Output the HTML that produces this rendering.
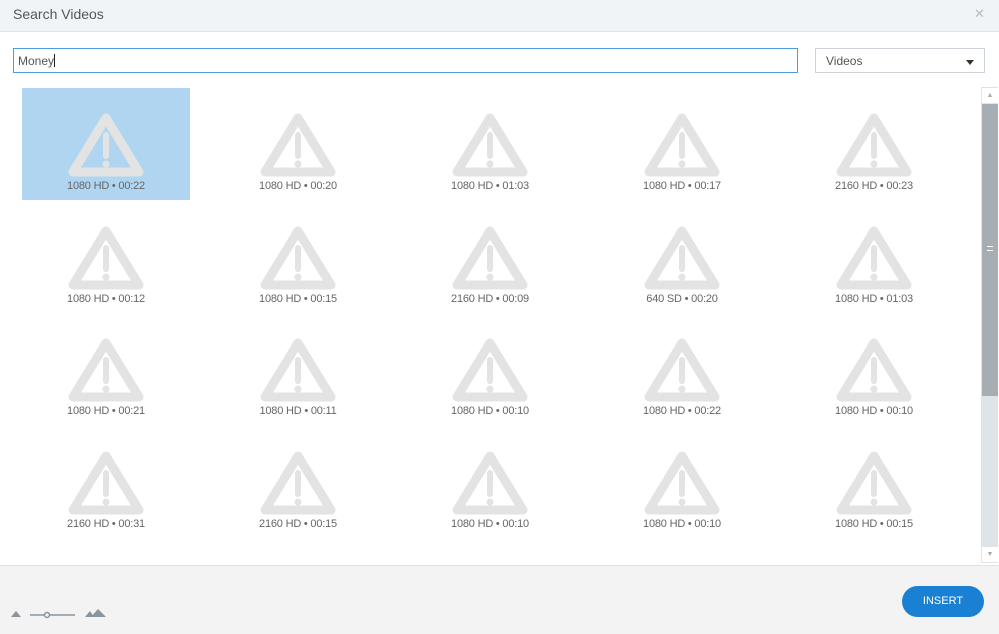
<!DOCTYPE html>
<html><head><style>
*{margin:0;padding:0;box-sizing:border-box}
body{width:999px;height:634px;overflow:hidden;background:#fff;font-family:"Liberation Sans",sans-serif;position:relative}
.hdr{position:absolute;left:0;top:0;width:999px;height:32px;background:#f1f4f7;border-bottom:1px solid #dfe3e7}
.hdr .t{position:absolute;left:13px;top:6px;font-size:14px;color:#555}
.hdr .x{position:absolute;left:974px;top:6px;font-size:13px;color:#bbb}
.inp{position:absolute;left:13px;top:48px;width:785px;height:25px;border:1px solid #4a9ee0;font-size:12px;color:#555;padding:5px 0 0 4px}
.inp i{display:inline-block;width:1px;height:13px;background:#222;vertical-align:-2px}
.sel{position:absolute;left:815px;top:48px;width:170px;height:25px;border:1px solid #cdd3d8;font-size:12px;color:#555;padding:5px 0 0 10px}
.sel b{position:absolute;right:10px;top:11px;border-left:4px solid transparent;border-right:4px solid transparent;border-top:5px solid #333}
.tile{position:absolute;width:168px;height:112px}
.tile svg{position:absolute;left:46px;top:23px}
.tile span{position:absolute;left:0;width:168px;top:92px;text-align:center;font-size:11px;color:#666;letter-spacing:-0.2px}
.sb{position:absolute;left:981px;top:87px;width:17px;height:476px;background:#dfe4e8;border:1px solid #e2e2e2}
.sb .th{position:absolute;left:0;top:16px;width:16px;height:292px;background:#a6aeb3}
.sb .a{position:absolute;left:0;width:16px;height:15px;background:#fff;font-size:7px;color:#aaa;text-align:center;line-height:15px}
.ft{position:absolute;left:0;top:565px;width:999px;height:69px;background:#f3f3f3;border-top:1px solid #dfe3e6}
.btn{position:absolute;left:902px;top:586px;width:82px;height:31px;border-radius:16px;background:#1a80d3;color:#fff;font-size:11px;text-align:center;line-height:31px}
</style></head><body>
<div class="hdr"><div class="t">Search Videos</div><div class="x">✕</div></div>
<div class="inp">Money<i></i></div>
<div class="sel">Videos<b></b></div>
<div id="g"></div>
<div class="sb"><div class="a" style="top:0">▲</div><div class="th"></div><div style="position:absolute;left:5px;top:158px;width:6px;height:5px;border-top:1px solid #fff;border-bottom:1px solid #fff"></div><div class="a" style="bottom:0">▼</div></div>
<div class="ft">
<svg style="position:absolute;left:10px;top:40px" width="100" height="14">
<polygon points="1,11 6,5 11,11" fill="#8a949c"/>
<line x1="20" y1="9" x2="65" y2="9" stroke="#8a949c" stroke-width="1.5"/>
<circle cx="37" cy="9" r="2.5" fill="#f3f3f3" stroke="#8a949c" stroke-width="1.5"/>
<polygon points="75,11 80,5 84,11" fill="#8a949c"/>
<polygon points="81,11 88,3 96,11" fill="#8a949c"/>
</svg>
</div>
<div class="btn">INSERT</div>
<script>
var L=[["1080 HD • 00:22","1080 HD • 00:20","1080 HD • 01:03","1080 HD • 00:17","2160 HD • 00:23"],
["1080 HD • 00:12","1080 HD • 00:15","2160 HD • 00:09","640 SD • 00:20","1080 HD • 01:03"],
["1080 HD • 00:21","1080 HD • 00:11","1080 HD • 00:10","1080 HD • 00:22","1080 HD • 00:10"],
["2160 HD • 00:31","2160 HD • 00:15","1080 HD • 00:10","1080 HD • 00:10","1080 HD • 00:15"]];
var tri='<svg width="76" height="68" viewBox="0 0 76 68"><path d="M38 7 L71 61 L5 61 Z" fill="none" stroke="#e3e3e3" stroke-width="9" stroke-linejoin="round"/><line x1="38" y1="24" x2="38" y2="45" stroke="#e3e3e3" stroke-width="6" stroke-linecap="round"/><circle cx="38" cy="53" r="3.5" fill="#e3e3e3"/></svg>';
var h='';
for(var r=0;r<4;r++)for(var c=0;c<5;c++){
var bg=(r==0&&c==0)?'background:#afd5f0;':'';
h+='<div class="tile" style="'+bg+'left:'+(22+c*192)+'px;top:'+(88+r*112.5)+'px">'+tri+'<span>'+L[r][c]+'</span></div>';}
document.getElementById('g').innerHTML=h;
</script>
</body></html>
